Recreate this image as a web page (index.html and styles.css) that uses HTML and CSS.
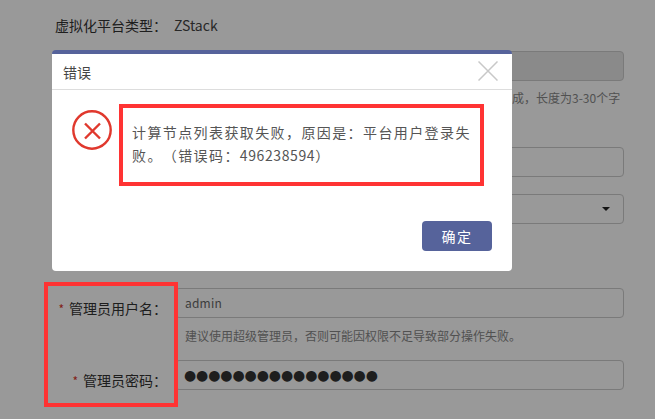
FILE: index.html
```html
<!DOCTYPE html>
<html lang="zh-CN">
<head>
<meta charset="utf-8">
<title>错误</title>
<link rel="stylesheet" href="styles.css">
</head>
<body>
<main class="form">
  <div class="row row-type"><span class="label">虚拟化平台类型：</span><span class="value">ZStack</span></div>
  <div class="row row-name"><span class="label"></span><div class="field field-disabled"></div></div>
  <p class="hint hint-name">集群名称只能由中文字符、英文字母、数字及下划线等字符组成，长度为3-30个字符</p>
  <div class="row row-addr"><span class="label"></span><div class="field"></div></div>
  <div class="row row-select"><span class="label"></span><div class="field field-select"><span class="caret"></span></div></div>
  <div class="row row-admin"><span class="label"><i class="req">*</i>管理员用户名：</span><div class="field">admin</div></div>
  <p class="hint hint-admin">建议使用超级管理员，否则可能因权限不足导致部分操作失败。</p>
  <div class="row row-pass"><span class="label"><i class="req">*</i>管理员密码：</span><div class="field field-pass">●●●●●●●●●●●●●●●●</div></div>
</main>
<div class="overlay">
  <section class="modal">
    <header class="modal-head">
      <h2 class="modal-title">错误</h2>
      <svg class="close" width="20" height="20" viewBox="0 0 20 20"><path d="M0.5 0.5L19.5 19.5M19.5 0.5L0.5 19.5" stroke="#c8c8c8" stroke-width="1.5" fill="none"/></svg>
    </header>
    <div class="modal-body">
      <svg class="err-icon" width="40" height="40" viewBox="0 0 40 40"><circle cx="20" cy="20" r="18.7" fill="none" stroke="#e0382d" stroke-width="2.4"/><path d="M13 13.5L28 28.5M28 13.5L13 28.5" stroke="#e0382d" stroke-width="2.4" fill="none"/></svg>
      <p class="msg">计算节点列表获取失败，原因是：平台用户登录失败。（错误码：<span class="code">496238594</span>）</p>
    </div>
    <footer class="modal-foot"><button class="btn">确定</button></footer>
  </section>
</div>
<div class="mark mark-msg"></div>
<div class="mark mark-labels"></div>
</body>
</html>
```
FILE: styles.css
```css
* { box-sizing: border-box; }
html, body { margin: 0; height: 100%; }
body {
  position: relative;
  width: 655px;
  height: 419px;
  overflow: hidden;
  background: #fff;
  font-family: "Noto Sans CJK SC", "Noto Sans", sans-serif;
  color: #444;
  text-spacing-trim: space-all;
}
.form { padding: 14px 31px 0 0; }
.row { display: flex; align-items: flex-start; }
.label {
  flex: 0 0 175px;
  height: 30px;
  padding-right: 8px;
  text-align: right;
  font-size: 14px;
  line-height: 40px;
  color: #333;
}
.req { font-style: normal; color: #d9342b; margin-right: 5px; font-size: 12px; }
.value { font-size: 14px; line-height: 22px; color: #444; margin-left: -1px; }
.row-type .label { line-height: 22px; height: 22px; }
.field {
  flex: 1;
  height: 30px;
  border: 1px solid #ccc;
  border-radius: 4px;
  padding-left: 9px;
  font-size: 12px;
  line-height: 28px;
  letter-spacing: .2px;
  color: #666;
  position: relative;
}
.field-disabled { background: #e6e6e6; }
.field-pass { color: #333; font-family: "DejaVu Sans", sans-serif; letter-spacing: -.1px; font-size: 14px; padding-left: 8px; }
.row-name { margin-top: 15px; }
.hint {
  margin: 8px 0 0 185px;
  font-size: 12px;
  line-height: 18px;
  color: #888;
}
.hint-name { height: 40px; text-indent: 3px; }
.row-addr { margin-top: 18px; }
.row-select { margin-top: 17px; }
.row-admin { margin-top: 64px; }
.hint-admin { height: 17px; margin-top: 9px; }
.row-pass { margin-top: 16px; }
.caret {
  position: absolute;
  right: 13px;
  top: 12px;
  border: 4px solid transparent;
  border-top: 4px solid #222;
  border-bottom: 0;
}
.overlay {
  position: absolute;
  inset: 0;
  background: rgba(0, 0, 0, .4);
  padding: 50px 0 0 52px;
}
.modal {
  width: 460px;
  height: 221px;
  background: #fff;
  border-top: 4px solid #56639b;
  border-radius: 4px;
  display: flex;
  flex-direction: column;
}
.modal-head {
  height: 36px;
  flex: none;
  border-bottom: 1px solid #ddd;
  padding: 7px 14px 0 11px;
  display: flex;
  justify-content: space-between;
  align-items: flex-start;
}
.modal-title { margin: -1px 0 0 0; font-size: 14px; font-weight: 400; line-height: 24px; color: #444; }
.modal-body { flex: 1; display: flex; padding: 20px 30px 0 20px; }
.err-icon { flex: none; margin-right: 20px; }
.msg { margin: 0; font-size: 14px; line-height: 23px; letter-spacing: 1.4px; color: #555; padding-top: 11px; }
.code { letter-spacing: .6px; }
.modal-foot { display: flex; justify-content: flex-end; padding: 0 20px 20px; }
.btn {
  width: 70px;
  height: 30px;
  border: 0;
  border-radius: 4px;
  background: #56639b;
  color: #fff;
  font: inherit;
  font-size: 14px;
  letter-spacing: 1.4px;
}
.mark { position: absolute; border: 4px solid #ff3333; }
.mark-msg { left: 119px; top: 104px; width: 365px; height: 82px; }
.mark-labels { left: 44px; top: 282px; width: 134px; height: 125px; }
```
